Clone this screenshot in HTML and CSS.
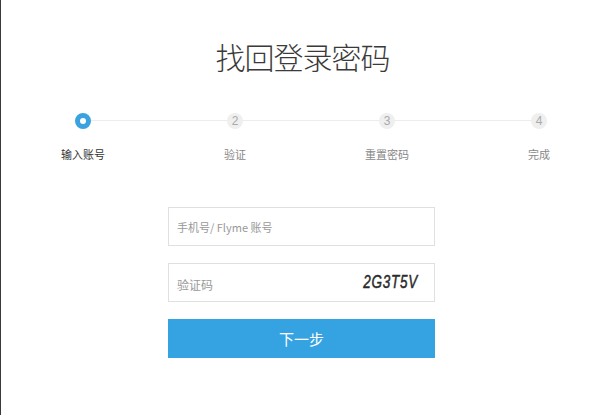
FILE: index.html
```html
<html lang="zh-CN">
<head>
    <meta charset="UTF-8">
    <meta name="viewport" content="width=device-width, initial-scale=1.0">
    <title>找回登录密码</title>
    <link rel="stylesheet" href="styles.css">
</head>
<body>
    <div class="page">
        <h1 class="title">找回登录密码</h1>

        <div class="steps">
            <div class="step active">
                <span class="dot"></span>
                <span class="label">输入账号</span>
            </div>
            <div class="step">
                <span class="dot">2</span>
                <span class="label">验证</span>
            </div>
            <div class="step">
                <span class="dot">3</span>
                <span class="label">重置密码</span>
            </div>
            <div class="step">
                <span class="dot">4</span>
                <span class="label">完成</span>
            </div>
        </div>

        <form class="find-form">
            <div class="field">
                <input type="text" class="account" placeholder="手机号/ Flyme 账号">
            </div>
            <div class="field captcha">
                <input type="text" class="code" placeholder="验证码">
                <span class="captcha-img">2G3T5V</span>
            </div>
            <button type="button" class="next-btn">下一步</button>
        </form>
    </div>
</body>
</html>
```

FILE: styles.css
```css
html, body { margin: 0; padding: 0; background: #fff; }
body {
    font-family: "Noto Sans CJK SC", "Liberation Sans", sans-serif;
    color: #333;
    border-left: 1px solid #3a3a3a;
    height: 415px;
    box-sizing: border-box;
    overflow: hidden;
}
.page { width: 611px; }
.title {
    margin: 37px 0 0 0;
    padding-right: 8px;
    font-size: 30px;
    line-height: 38px;
    font-weight: 300;
    text-align: center;
    color: #3a3a3a;
    letter-spacing: -1px;
}

.steps {
    position: relative;
    display: flex;
    gap: 72px;
    margin: 38px 0 0 42px;
}
.steps::before {
    content: "";
    position: absolute;
    top: 7px;
    left: 40px;
    width: 456px;
    height: 1px;
    background: #ececec;
}
.step {
    position: relative;
    width: 80px;
    display: flex;
    flex-direction: column;
    align-items: center;
}
.dot {
    width: 16px;
    height: 16px;
    border-radius: 50%;
    background: #efefef;
    color: #aaa;
    font-family: "Liberation Sans", sans-serif;
    font-size: 12px;
    line-height: 16px;
    text-align: center;
}
.step.active .dot {
    box-sizing: border-box;
    background: #fff;
    border: 5px solid #3ba2e0;
}
.label {
    margin-top: 17px;
    font-size: 11px;
    line-height: 16px;
    color: #888;
}
.step.active .label { color: #333; }

.find-form {
    width: 267px;
    margin: 45px 0 0 167px;
    display: flex;
    flex-direction: column;
    gap: 17px;
}
.field {
    height: 39px;
    border: 1px solid #e0e0e0;
    box-sizing: border-box;
    display: flex;
    align-items: center;
    padding: 0 16px 0 8px;
}
.field input {
    flex: 1;
    min-width: 0;
    border: none;
    outline: none;
    font-family: "Noto Sans CJK SC", sans-serif;
    color: #333;
    background: transparent;
    padding: 0;
}
.account { font-size: 11px; }
.code { font-size: 12px; padding-top: 3px !important; }
.field input::placeholder { color: #999; }
.captcha-img {
    font-family: "Liberation Sans", sans-serif;
    font-style: italic;
    font-size: 18px;
    letter-spacing: 1px;
    color: #2a2a2a;
    -webkit-text-stroke: 0.5px #2a2a2a;
    transform: scaleX(0.75);
    transform-origin: right center;
}
.next-btn {
    height: 39px;
    border: none;
    background: #35a3e2;
    color: #fff;
    font-family: "Noto Sans CJK SC", sans-serif;
    font-size: 15px;
    padding: 0;
    cursor: pointer;
}
```
